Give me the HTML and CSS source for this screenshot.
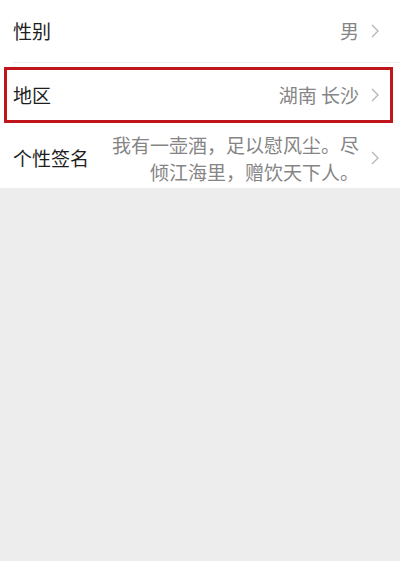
FILE: index.html
```html
<!DOCTYPE html>
<html lang="zh-CN">
<head>
<meta charset="utf-8">
<link rel="stylesheet" href="styles.css">
</head>
<body>
<div class="list">
  <div class="row row-first">
    <span class="name">性别</span>
    <span class="value">男</span>
    <svg class="chev" viewBox="0 0 8 14" width="8" height="14"><path d="M1 1 L7 7 L1 13" fill="none" stroke="#b5b5b5" stroke-width="1.3"/></svg>
  </div>
  <div class="sep"></div>
  <div class="row row-region">
    <span class="name">地区</span>
    <span class="value">湖南 长沙</span>
    <svg class="chev" viewBox="0 0 8 14" width="8" height="14"><path d="M1 1 L7 7 L1 13" fill="none" stroke="#b5b5b5" stroke-width="1.3"/></svg>
  </div>
  <div class="row row-sign">
    <span class="name">个性签名</span>
    <span class="value value-multi">我有一壶酒，足以慰风尘。尽<br>倾江海里，赠饮天下人。</span>
    <svg class="chev" viewBox="0 0 8 14" width="8" height="14"><path d="M1 1 L7 7 L1 13" fill="none" stroke="#b5b5b5" stroke-width="1.3"/></svg>
  </div>
</div>
</body>
</html>
```

FILE: styles.css
```css
html, body {
  margin: 0;
  padding: 0;
}
body {
  background: #ededed;
  font-family: "Noto Sans CJK SC", "Noto Sans", sans-serif;
  width: 400px;
  height: 561px;
  overflow: hidden;
}
.list {
  background: #ffffff;
}
.row {
  display: flex;
  align-items: center;
  padding: 0 21px 0 13px;
  box-sizing: border-box;
}
.row-first {
  height: 62px;
}
.sep {
  height: 1px;
  margin-left: 13px;
  background: #eeeeee;
}
.row-region {
  height: 64px;
  position: relative;
}
.row-region::after {
  content: "";
  position: absolute;
  top: 4px;
  left: 4px;
  right: 7px;
  bottom: 4px;
  border: 3px solid #c0161b;
}
.row-sign {
  height: 61px;
}
.name {
  font-size: 19px;
  color: #1e1e1e;
  flex: 1;
  line-height: 26px;
}
.value {
  font-size: 19px;
  color: #858585;
  line-height: 26px;
  margin-right: 12px;
  text-align: right;
}
.value-multi {
  line-height: 27px;
  padding-top: 1px;
}
.chev {
  display: block;
  flex: none;
}
```
